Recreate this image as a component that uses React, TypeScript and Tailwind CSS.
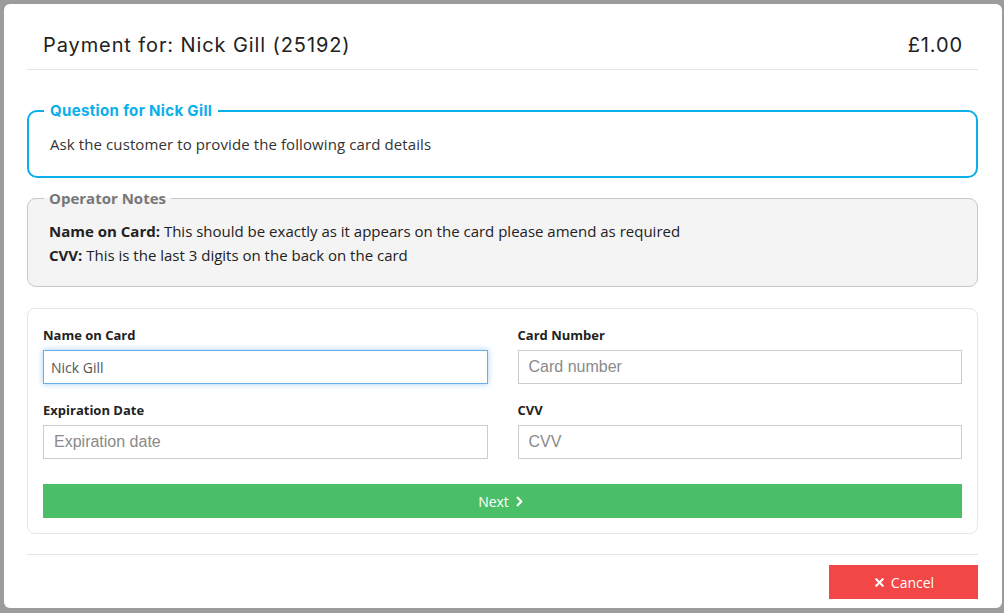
import { ChevronRight, X } from "lucide-react";

function Field({ label, placeholder, value, focused }: { label: string; placeholder: string; value?: string; focused?: boolean }) {
  return (
    <div className="flex flex-col">
      <label className="text-[13px] leading-[18px] font-bold text-[#222] mb-[6px]">{label}</label>
      <input
        defaultValue={value}
        placeholder={placeholder}
        autoFocus={focused}
        className={
          focused
            ? "h-[34px] w-full border border-[#66afe9] px-[7px] text-[14px] text-[#555] outline-none shadow-[0_0_6px_rgba(102,175,233,0.6)] caret-[#222]"
            : "h-[34px] w-full border border-[#ccc] px-[10px] text-[16px] text-[#555] outline-none placeholder:text-[#8a8a8a] font-['Liberation_Sans',Arial,sans-serif]"
        }
      />
    </div>
  );
}

export default function App() {
  return (
    <div className="w-full h-[613px] bg-[#9c9c9c] pt-[4px] pl-[4px] pr-[2px] overflow-hidden font-['Open_Sans','Noto_Sans',sans-serif]">
      <div className="h-[604px] bg-white rounded-[6px] pl-[23px] pr-[24px] flex flex-col">
        {/* HEADER */}
        <div className="flex items-center justify-between pt-[26px] pb-[9px] pl-[16px] pr-[15px] border-b border-[#e3e3e3] font-['Inter','Open_Sans',sans-serif]">
          <h1 className="text-[20px] leading-[30px] text-[#222] tracking-[0.9px]">Payment for: Nick Gill (25192)</h1>
          <span className="text-[20px] leading-[30px] text-[#222] tracking-[0.9px]">£1.00</span>
        </div>

        {/* QUESTION */}
        <fieldset className="mt-[31px] border-2 border-[#0aaee8] rounded-[10px] pl-[15px] pr-[20px] pb-[22px]">
          <legend className="px-[6px] text-[15px] leading-[20px] font-bold text-[#0aaee8] tracking-[0.35px] font-['Inter','Open_Sans',sans-serif]">
            Question for Nick Gill
          </legend>
          <p className="pl-[6px] mt-[13px] text-[15px] leading-[20px] text-[#333] tracking-[0.1px]">
            Ask the customer to provide the following card details
          </p>
        </fieldset>

        {/* OPERATOR NOTES */}
        <fieldset className="mt-[10px] border border-[#c8c8c8] bg-[#f4f4f4] rounded-[9px] pl-[16px] pr-[20px] pb-[19px]">
          <legend className="px-[5px] text-[15px] leading-[20px] font-bold text-[#777]">Operator Notes</legend>
          <div className="pl-[5px] mt-[11px] text-[15px] leading-[24px] text-[#222]">
            <p>
              <b>Name on Card:</b> This should be exactly as it appears on the card please amend as required
            </p>
            <p>
              <b>CVV:</b> This is the last 3 digits on the back on the card
            </p>
          </div>
        </fieldset>

        {/* FORM */}
        <div className="mt-[21px] border border-[#e6e6e6] rounded-[8px] px-[15px] pt-[17px] pb-[15px]">
          <div className="grid grid-cols-2 gap-x-[30px] gap-y-[17px]">
            <Field label="Name on Card" placeholder="Name on card" value="Nick Gill" focused />
            <Field label="Card Number" placeholder="Card number" />
            <Field label="Expiration Date" placeholder="Expiration date" />
            <Field label="CVV" placeholder="CVV" />
          </div>
          <button className="mt-[25px] w-full h-[34px] bg-[#4abf68] text-white text-[14px] flex items-center justify-center gap-[3px]">
            Next
            <ChevronRight size={15} strokeWidth={3.5} />
          </button>
        </div>

        {/* FOOTER */}
        <div className="mt-[20px] border-t border-[#e3e3e3] pt-[10px] flex justify-end">
          <button className="w-[149px] h-[34px] bg-[#f34646] text-white text-[14px] flex items-center justify-center gap-[5px]">
            <X size={13} strokeWidth={4} />
            Cancel
          </button>
        </div>
      </div>
    </div>
  );
}
